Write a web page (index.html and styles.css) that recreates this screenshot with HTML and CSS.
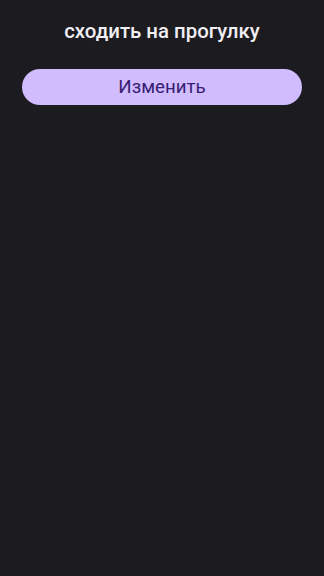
FILE: index.html
```html
<!DOCTYPE html>
<html lang="ru">
<head>
    <meta charset="UTF-8">
    <meta name="viewport" content="width=device-width, initial-scale=1.0">
    <title>Задача</title>
    <link rel="stylesheet" href="styles.css">
</head>
<body>
    <div class="screen">
        <h1 class="task-title">сходить на прогулку</h1>
        <button class="edit-btn">Изменить</button>
    </div>
</body>
</html>
```

FILE: styles.css
```css
html, body {
    margin: 0;
    padding: 0;
    height: 100%;
    background: #1c1b1f;
}
body {
    font-family: Roboto, 'Noto Sans', sans-serif;
}
.screen {
    display: flex;
    flex-direction: column;
    padding: 17px 22px 0 22px;
}
.task-title {
    margin: 0;
    text-align: center;
    color: #f1eef4;
    font-size: 20.4px;
    font-weight: 500;
    line-height: 28px;
}
.edit-btn {
    margin-top: 24px;
    height: 36px;
    border: none;
    border-radius: 18px;
    background: #d0bcff;
    color: #381e72;
    font-family: Roboto, 'Noto Sans', sans-serif;
    font-size: 18.7px;
    padding: 0;
    cursor: pointer;
}
```
